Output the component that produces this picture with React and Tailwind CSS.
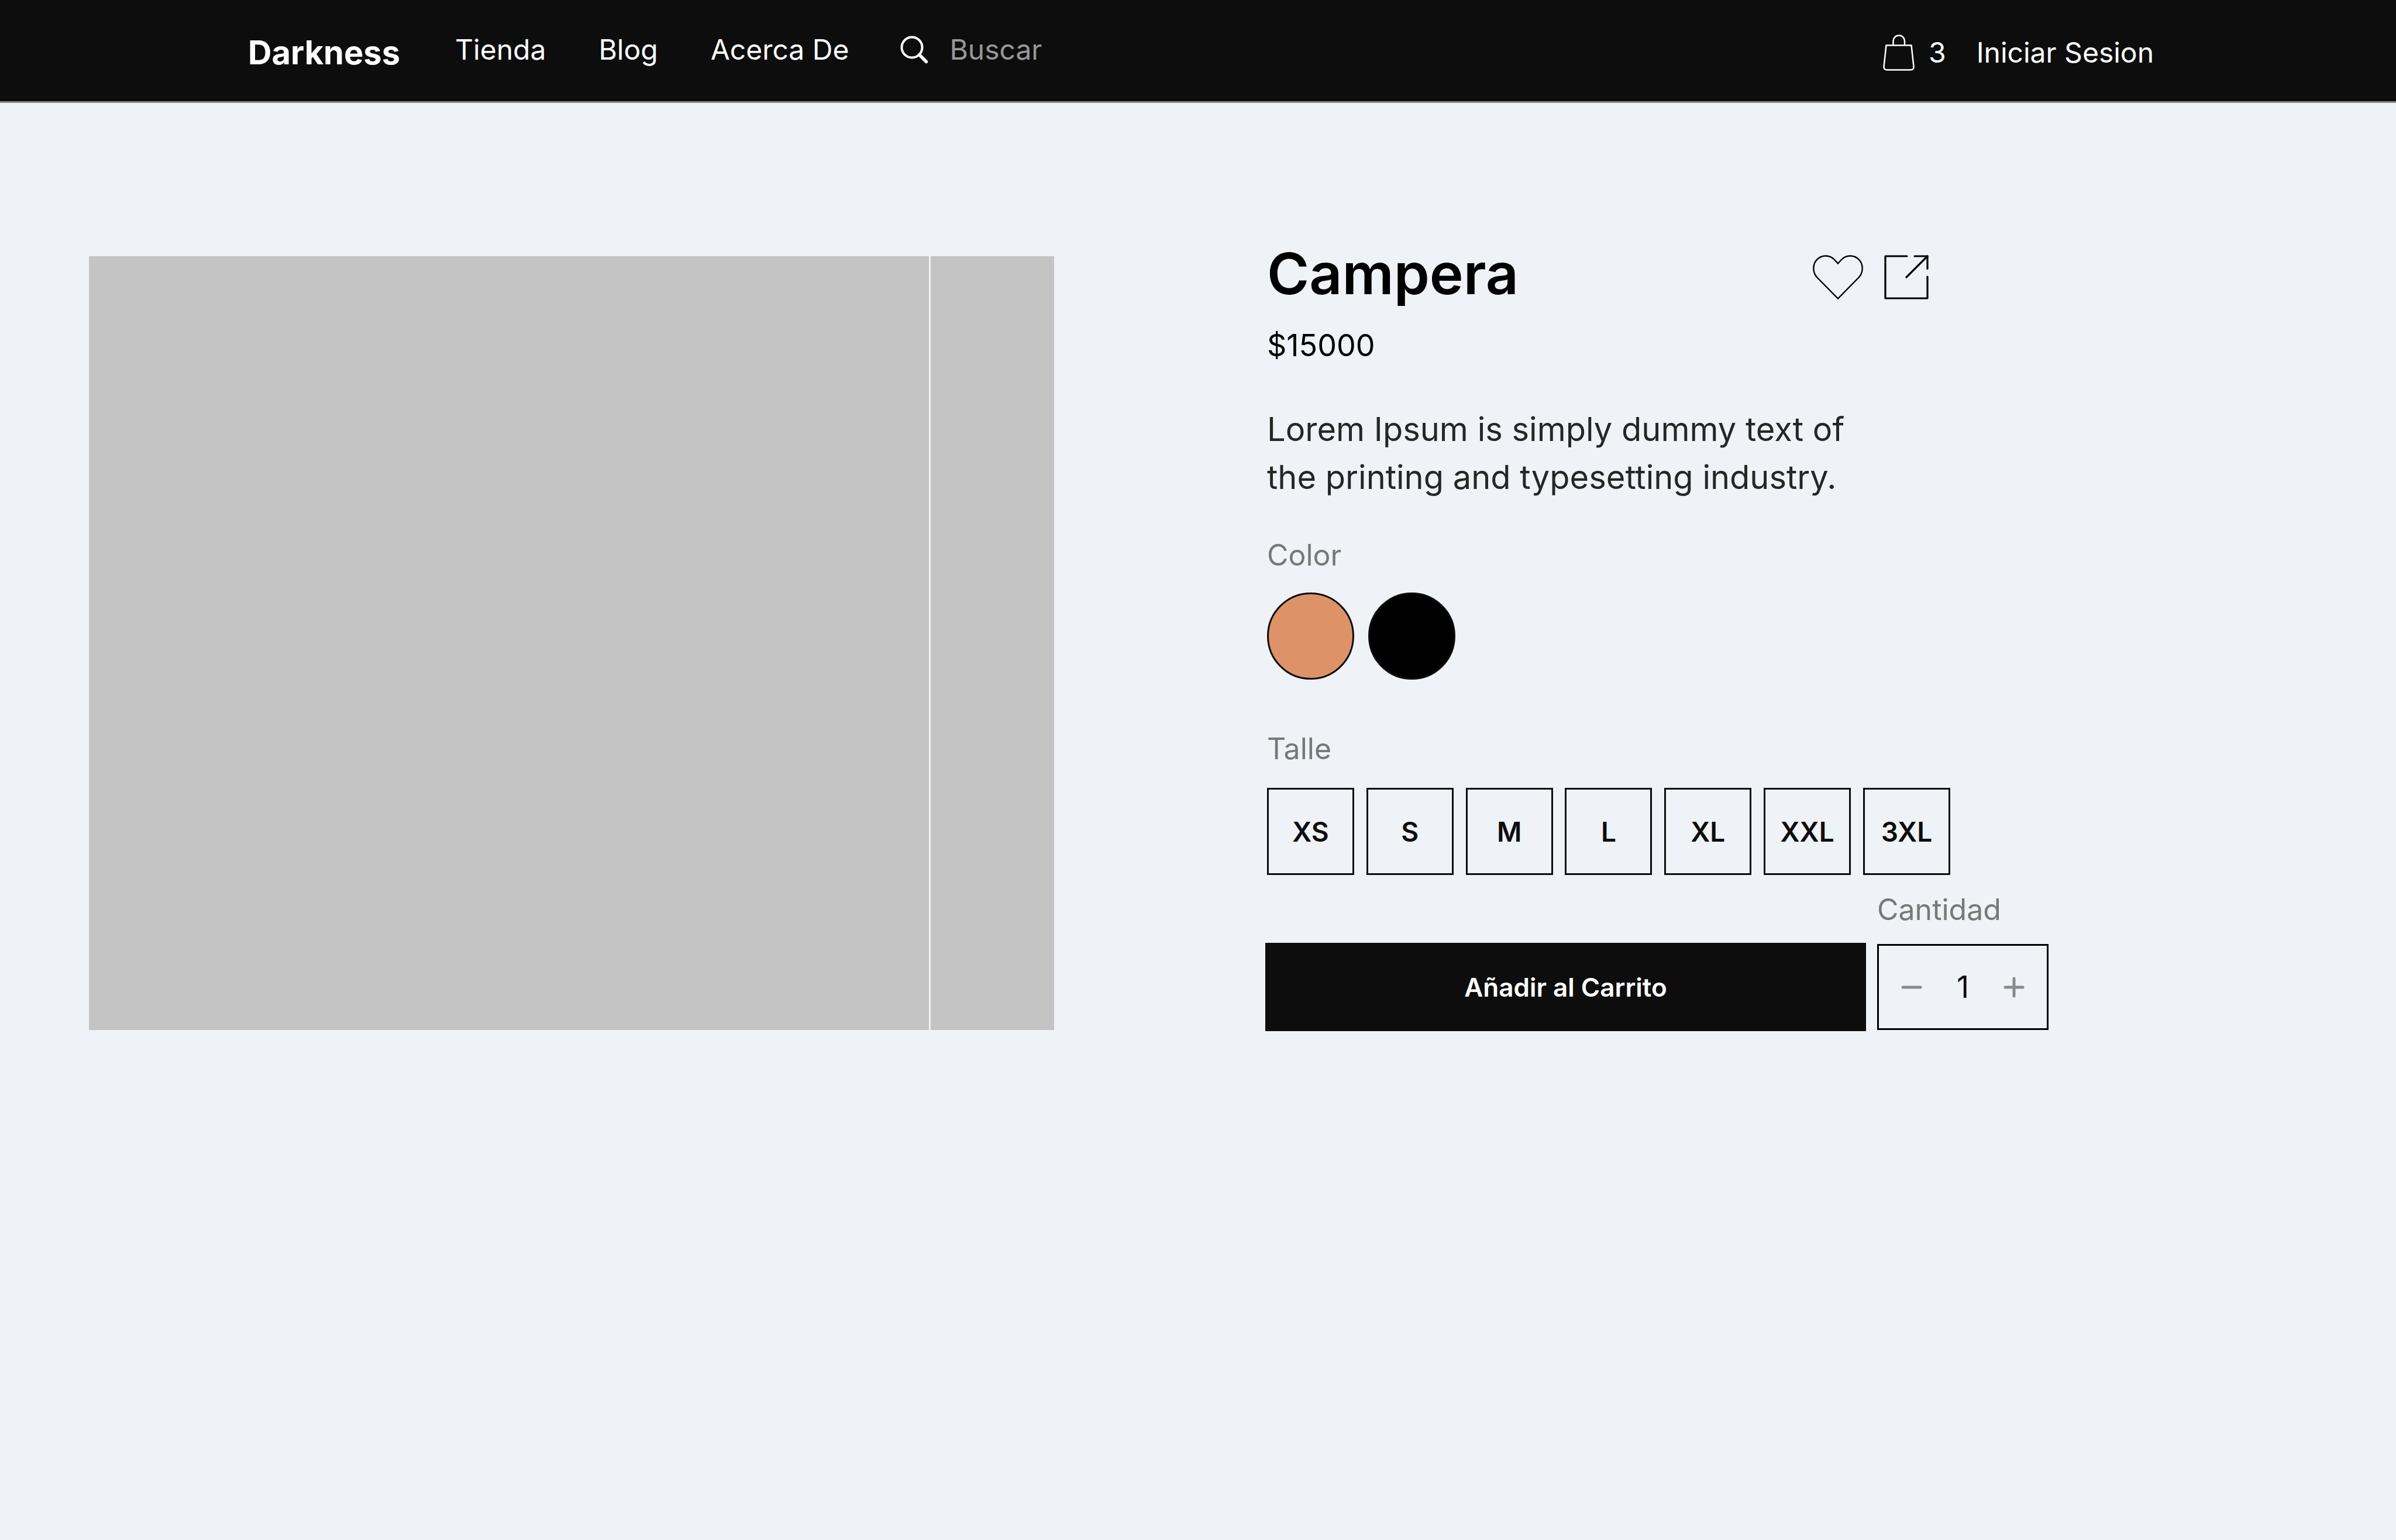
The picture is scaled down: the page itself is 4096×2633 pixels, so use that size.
import React, { useState } from "react";

const sizes = ["XS", "S", "M", "L", "XL", "XXL", "3XL"];

const swatches = [
  { name: "Camel", className: "bg-[#de9268]" },
  { name: "Negro", className: "bg-black" },
];

function SearchIcon() {
  return (
    <svg viewBox="0 0 48 48" className="size-[48px] shrink-0" fill="none" stroke="currentColor" aria-hidden="true">
      <circle cx="20" cy="20" r="17.5" strokeWidth="4" />
      <path d="M32.5 32.5 44.5 44.5" strokeWidth="5.5" strokeLinecap="round" />
    </svg>
  );
}

function BagIcon() {
  return (
    <svg viewBox="0 0 54 62" className="h-[62px] w-[54px] shrink-0" fill="none" stroke="currentColor" strokeWidth="2.5" aria-hidden="true">
      <path d="M5.5 18.5H48.5L52.5 54.5Q52.8 60.5 47 60.5H7Q1.2 60.5 1.5 54.5Z" />
      <path d="M17.5 18.5V11.5A9.75 10 0 0 1 37 11.5V18.5" />
    </svg>
  );
}

function HeartIcon() {
  return (
    <svg viewBox="0 0 86 76" className="h-[76px] w-[86px]" fill="none" stroke="currentColor" strokeWidth="2.4" aria-hidden="true">
      <path d="M43 74.5 7.5 38.5C-1 29.5-.5 15 7.5 7.5C15.5-.5 29-.5 37 8L43 14.5 49 8C57-.5 70.5-.5 78.5 7.5C86.5 15 87 29.5 78.5 38.5Z" />
    </svg>
  );
}

function ShareIcon() {
  return (
    <svg viewBox="0 0 76 76" className="size-[76px]" fill="none" stroke="currentColor" strokeWidth="3.2" strokeLinecap="round" strokeLinejoin="round" aria-hidden="true">
      <path d="M39 2H2V74H74V37" />
      <path d="M52 2H74V23.5" />
      <path d="M74 2 38 38" />
    </svg>
  );
}

function Header() {
  return (
    <header className="flex h-[176px] items-center justify-between border-b-3 border-[#8a8a8a] bg-[#0d0d0d] pl-[424px] pr-[414px] pt-1.5 text-[48px] leading-[62px] text-white">
      <div className="flex items-center">
        <a href="#inicio" className="text-[56px] font-bold">Darkness</a>
        <nav className="ml-[94px] flex gap-[90px] pb-2.5">
          <a href="#tienda">Tienda</a>
          <a href="#blog">Blog</a>
          <a href="#acerca">Acerca De</a>
        </nav>
        <label className="ml-[88px] flex items-center gap-9 pb-2.5">
          <SearchIcon />
          <input
            type="search"
            aria-label="Buscar"
            placeholder="Buscar"
            className="w-[400px] bg-transparent outline-none placeholder:text-[#979797]"
          />
        </label>
      </div>
      <div className="flex items-center gap-[52px]">
        <a href="#carrito" aria-label="Carrito, 3 productos" className="flex items-center gap-6">
          <BagIcon />
          <span>3</span>
        </a>
        <a href="#ingresar">Iniciar Sesion</a>
      </div>
    </header>
  );
}

function Quantity() {
  const [quantity, setQuantity] = useState(1);
  return (
    <div className="flex h-[147px] items-center justify-between border-3 border-black px-[38px] text-[#8a8a8a]">
      <button type="button" aria-label="Quitar uno" onClick={() => setQuantity(Math.max(1, quantity - 1))}>
        <svg viewBox="0 0 36 36" className="size-[36px]" stroke="currentColor" strokeWidth="5" strokeLinecap="round" aria-hidden="true">
          <path d="M3 18H33" />
        </svg>
      </button>
      <input
        id="cantidad"
        type="text"
        inputMode="numeric"
        value={quantity}
        onChange={(event) => setQuantity(Number(event.target.value) || 1)}
        className="w-[80px] bg-transparent text-center text-[52px] leading-[62px] text-[#0d0d0d] outline-none"
      />
      <button type="button" aria-label="Agregar uno" onClick={() => setQuantity(quantity + 1)}>
        <svg viewBox="0 0 36 36" className="size-[36px]" stroke="currentColor" strokeWidth="5" strokeLinecap="round" aria-hidden="true">
          <path d="M3 18H33M18 3V33" />
        </svg>
      </button>
    </div>
  );
}

function ProductDetails() {
  return (
    <section className="w-[1339px] shrink-0 text-[50px] leading-[62px] text-[#787878]">
      <div className="pl-[3px]">
        <div className="flex items-end">
          <h1 className="w-[933px] text-[98px] font-semibold leading-[120px] text-black">Campera</h1>
          <div className="flex gap-9 pb-4 text-black">
            <button type="button" aria-label="Guardar en favoritos">
              <HeartIcon />
            </button>
            <button type="button" aria-label="Compartir">
              <ShareIcon />
            </button>
          </div>
        </div>
        <p className="mt-8 text-[52px] text-black">$15000</p>
        <p className="mt-[71px] text-[56px] leading-[82px] text-[#262626]">
          Lorem Ipsum is simply dummy text of
          <br />
          the printing and typesetting industry.
        </p>

        <fieldset className="mt-[61px]">
          <legend>Color</legend>
          <div className="mt-[33px] flex gap-6">
            {swatches.map((swatch) => (
              <input
                key={swatch.name}
                type="radio"
                name="color"
                aria-label={swatch.name}
                className={`size-[149px] appearance-none rounded-full border-3 border-[#0d0d0d] ${swatch.className}`}
              />
            ))}
          </div>
        </fieldset>

        <fieldset className="mt-[87px]">
          <legend>Talle</legend>
          <div className="mt-9 flex w-[1168px] justify-between">
            {sizes.map((size) => (
              <button
                key={size}
                type="button"
                className="size-[149px] border-3 border-[#0d0d0d] text-[46px] font-semibold text-[#0d0d0d]"
              >
                {size}
              </button>
            ))}
          </div>
        </fieldset>
      </div>

      <div className="mt-7 grid grid-cols-[1fr_293px] items-center gap-x-[19px] gap-y-[26px]">
        <label htmlFor="cantidad" className="col-start-2">Cantidad</label>
        <button type="button" className="h-[151px] bg-[#0d0d0d] text-[44px] font-semibold text-white">
          Añadir al Carrito
        </button>
        <Quantity />
      </div>
    </section>
  );
}

export default function App() {
  return (
    <div className="min-h-screen bg-[#eff2f7] font-['Inter',sans-serif]">
      <Header />
      <main className="flex items-start gap-[361px] pb-24 pl-[152px] pr-[594px] pt-[232px]">
        <div className="mt-[30px] flex h-[1323px] flex-1 gap-[3px]">
          <div className="flex-1 bg-[#c4c4c4]" />
          <div className="w-[211px] bg-[#c4c4c4]" />
        </div>
        <ProductDetails />
      </main>
    </div>
  );
}
